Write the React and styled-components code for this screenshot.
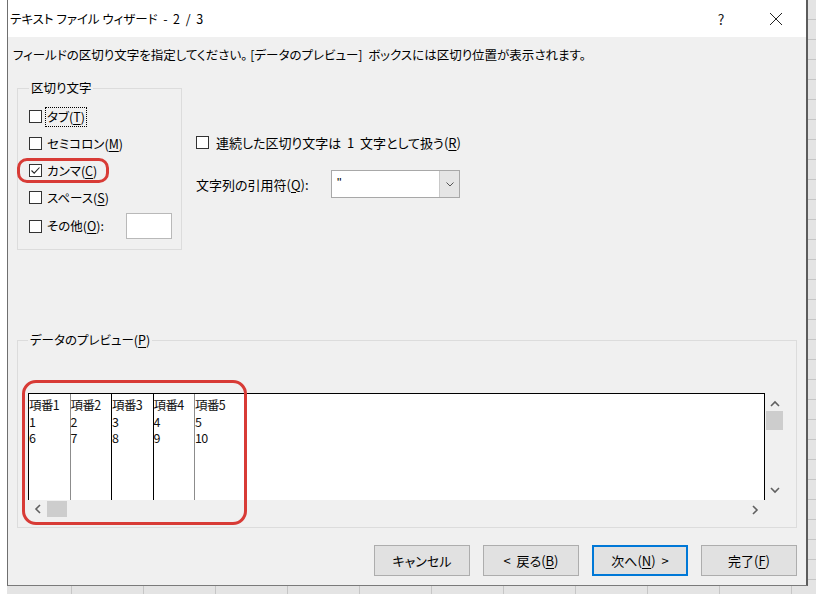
import React from "react";
import styled, { createGlobalStyle } from "styled-components";

const GlobalStyle = createGlobalStyle`
  html, body {
    margin: 0;
    padding: 0;
  }
  body {
    width: 816px;
    height: 594px;
    overflow: hidden;
    background-color: #e4e4e4;
    background-image:
      repeating-linear-gradient(to bottom, transparent 0 19px, #c6c6c6 19px 20px),
      repeating-linear-gradient(to right, transparent 0 71px, #c6c6c6 71px 72px);
    font-family: "Noto Sans CJK JP", "Noto Sans", sans-serif;
    color: #000;
  }
`;

const Screen = styled.div`
  display: flex;
  align-items: flex-start;
  height: 594px;
`;

const LeftGap = styled.div`
  width: 7px;
  align-self: stretch;
  background: #fff;
`;

const Dialog = styled.div`
  width: 801px;
  height: 586px;
  box-sizing: border-box;
  display: flex;
  flex-direction: column;
  background: #f0f0f0;
  border-left: 1px solid #6f6f6f;
  border-right: 2px solid #5c5c5c;
  border-bottom: 1px solid #7a7a7a;
  font-size: 12.5px;
  font-feature-settings: "palt";
`;

const TitleBar = styled.div`
  height: 37px;
  flex-shrink: 0;
  display: flex;
  align-items: center;
  background: #fff;
  padding-left: 2px;
`;

const Title = styled.div`
  flex: 1;
  font-size: 12.5px;
  white-space: pre;
`;

const TitleButton = styled.div`
  width: 46px;
  height: 37px;
  display: flex;
  align-items: center;
  justify-content: center;
  font-size: 14px;
  color: #222;
  margin-right: ${(p) => p.$mr || 0}px;
`;

const Body = styled.div`
  flex: 1;
  display: flex;
  flex-direction: column;
  padding: 0 9px 0 9px;
`;

const Instruction = styled.div`
  margin: 9px 0 0 -4px;
  line-height: 18px;
  white-space: pre;
`;

const TopArea = styled.div`
  display: flex;
  align-items: flex-start;
  margin-top: 15px;
`;

const Group = styled.fieldset`
  margin: 0;
  border: 1px solid #dcdcdc;
  padding: ${(p) => p.$pad};
  width: ${(p) => p.$width};
  box-sizing: border-box;
  min-width: 0;
`;

const Legend = styled.legend`
  padding: 0 2px;
  line-height: 18px;
`;

const OptionRow = styled.div`
  position: relative;
  display: flex;
  align-items: center;
  height: ${(p) => p.$h || 27}px;
`;

const Box = styled.span`
  width: 13px;
  height: 13px;
  box-sizing: border-box;
  border: 1px solid #333;
  background: #fff;
  display: inline-flex;
  align-items: center;
  justify-content: center;
  flex-shrink: 0;
  margin-right: ${(p) => p.$gap || 5}px;
`;

const Label = styled.span`
  border: 1px dotted ${(p) => (p.$focus ? "#000" : "transparent")};
  padding: 1px 1px;
  margin-left: -2px;
  line-height: 16px;
  white-space: nowrap;
`;

const Key = styled.span`
  text-decoration: underline;
  text-underline-offset: 2px;
`;

const SmallInput = styled.span`
  width: 46px;
  height: 26px;
  box-sizing: border-box;
  border: 1px solid #b9b9b9;
  background: #fff;
  margin-left: auto;
`;

const Ring = styled.span`
  position: absolute;
  left: ${(p) => p.$l}px;
  top: ${(p) => p.$t}px;
  width: ${(p) => p.$w}px;
  height: ${(p) => p.$h}px;
  box-sizing: border-box;
  border: 3px solid #d83b36;
  border-radius: ${(p) => p.$r}px;
  pointer-events: none;
`;

const Options = styled.div`
  display: flex;
  flex-direction: column;
  margin-left: 14px;
  padding-top: 53px;
`;

const SimpleRow = styled.div`
  display: flex;
  align-items: center;
  height: 20px;
  white-space: pre;
  font-size: 13px;
`;

const QuoteRow = styled.div`
  display: flex;
  align-items: center;
  margin-top: 18px;
  white-space: nowrap;
`;

const QuoteLabel = styled.span`
  width: 135px;
  font-size: 13px;
`;

const Combo = styled.div`
  display: flex;
  width: 129px;
  height: 28px;
  box-sizing: border-box;
  border: 1px solid #a8a8a8;
  background: #fff;
`;

const ComboText = styled.div`
  flex: 1;
  padding-left: 5px;
  line-height: 24px;
  font-family: "Liberation Sans", sans-serif;
`;

const ComboButton = styled.div`
  width: 19px;
  background: #e5e5e5;
  border-left: 1px solid #c9c9c9;
  display: flex;
  align-items: center;
  justify-content: center;
`;

const PreviewGroup = styled(Group)`
  margin-top: 81px;
`;

const PreviewWrap = styled.div`
  position: relative;
  display: grid;
  grid-template-columns: 1fr 19px;
  grid-template-rows: 107px 18px;
`;

const DataArea = styled.div`
  display: flex;
  background: #fff;
  border: 1px solid #000;
  border-bottom: none;
  overflow: hidden;
`;

const DataCol = styled.div`
  width: ${(p) => (p.$last ? 50 : 40.5)}px;
  flex-shrink: 0;
  border-right: 1px solid ${(p) => (p.$last ? "transparent" : p.$dark ? "#000" : "#8c8c8c")};
  font-feature-settings: normal;
  font-size: 12.5px;
  line-height: 16.5px;
  padding-top: 3px;
  letter-spacing: -0.6px;
  color: #111;
`;

const VScroll = styled.div`
  display: flex;
  flex-direction: column;
  align-items: center;
  padding-top: 7px;
`;

const VThumb = styled.div`
  width: 17px;
  height: 19px;
  background: #cdcdcd;
  margin-top: 3px;
`;

const HScroll = styled.div`
  display: flex;
  align-items: center;
  padding-left: 6px;
`;

const HThumb = styled.div`
  width: 20px;
  height: 16px;
  background: #cdcdcd;
  margin-left: 5px;
`;

const Spacer = styled.div`
  flex: 1;
`;

const Corner = styled.div``;

const ButtonRow = styled.div`
  display: flex;
  justify-content: flex-end;
  gap: 13px;
  margin-top: 17px;
`;

const Button = styled.div`
  width: 96px;
  height: 31px;
  box-sizing: border-box;
  display: flex;
  align-items: center;
  justify-content: center;
  background: #e1e1e1;
  border: 1px solid ${(p) => (p.$primary ? "#0078d7" : "#adadad")};
  box-shadow: ${(p) => (p.$primary ? "inset 0 0 0 1px #0078d7" : "none")};
  white-space: pre;
  font-size: 13px;
`;

const Chevron = ({ dir }) => {
  const paths = {
    up: "M1 6 L5 2 L9 6",
    down: "M1 2 L5 6 L9 2",
    left: "M6 1 L2 5 L6 9",
    right: "M2 1 L6 5 L2 9",
  };
  const vertical = dir === "up" || dir === "down";
  return (
    <svg
      width={vertical ? 10 : 8}
      height={vertical ? 8 : 10}
      viewBox={vertical ? "0 0 10 8" : "0 0 8 10"}
    >
      <path d={paths[dir]} fill="none" stroke="#606060" strokeWidth="1.6" />
    </svg>
  );
};

const Check = () => (
  <svg width="11" height="11" viewBox="0 0 11 11">
    <path d="M1.5 5.5 L4.2 8.2 L9.5 2.5" fill="none" stroke="#222" strokeWidth="1.1" />
  </svg>
);

const columns = [
  ["項番1", "1", "6"],
  ["項番2", "2", "7"],
  ["項番3", "3", "8"],
  ["項番4", "4", "9"],
  ["項番5", "5", "10"],
];

const delimiters = [
  { text: "タブ", key: "T", focus: true },
  { text: "セミコロン", key: "M" },
  { text: "カンマ", key: "C", checked: true, ring: true },
  { text: "スペース", key: "S" },
];

const App = () => {
  return (
    <>
      <GlobalStyle />
      <Screen>
        <LeftGap />
        <Dialog>
          <TitleBar>
            <Title>テキスト ファイル ウィザード  -  2  /  3</Title>
            <TitleButton $mr={9}>?</TitleButton>
            <TitleButton $mr={7}>
              <svg width="14" height="14" viewBox="0 0 14 14">
                <path d="M1 1 L13 13 M13 1 L1 13" stroke="#222" strokeWidth="1" />
              </svg>
            </TitleButton>
          </TitleBar>
          <Body>
            <Instruction>
              フィールドの区切り文字を指定してください。 [データのプレビュー]  ボックスには区切り位置が表示されます。
            </Instruction>
            <TopArea>
              <Group $width="165px" $pad="6px 9px 8px 11px">
                <Legend>区切り文字</Legend>
                {delimiters.map((d) => (
                  <OptionRow key={d.key}>
                    <Box>{d.checked && <Check />}</Box>
                    <Label $focus={d.focus}>
                      {d.text}(<Key>{d.key}</Key>)
                    </Label>
                    {d.ring && <Ring $l={-12} $t={1} $w={92} $h={25} $r={10} />}
                  </OptionRow>
                ))}
                <OptionRow $h={30}>
                  <Box />
                  <Label>
                    その他(<Key>O</Key>):
                  </Label>
                  <SmallInput />
                </OptionRow>
              </Group>
              <Options>
                <SimpleRow>
                  <Box $gap={7} />
                  連続した区切り文字は  1  文字として扱う(<Key>R</Key>)
                </SimpleRow>
                <QuoteRow>
                  <QuoteLabel>
                    文字列の引用符(<Key>Q</Key>):
                  </QuoteLabel>
                  <Combo>
                    <ComboText>"</ComboText>
                    <ComboButton>
                      <svg width="8" height="5" viewBox="0 0 8 5">
                        <path d="M0.5 0.5 L4 4 L7.5 0.5" fill="none" stroke="#555" strokeWidth="1" />
                      </svg>
                    </ComboButton>
                  </Combo>
                </QuoteRow>
              </Options>
            </TopArea>
            <PreviewGroup $width="100%" $pad="44px 12px 9px 10px">
              <Legend>
                データのプレビュー(<Key>P</Key>)
              </Legend>
              <PreviewWrap>
                <DataArea>
                  {columns.map((col, i) => (
                    <DataCol key={i} $dark={i === 1 || i === 2} $last={i === columns.length - 1}>
                      {col.map((v) => (
                        <div key={v}>{v}</div>
                      ))}
                    </DataCol>
                  ))}
                </DataArea>
                <VScroll>
                  <Chevron dir="up" />
                  <VThumb />
                  <Spacer />
                  <div style={{ marginBottom: 2 }}>
                    <Chevron dir="down" />
                  </div>
                </VScroll>
                <HScroll>
                  <Chevron dir="left" />
                  <HThumb />
                  <Spacer />
                  <div style={{ marginRight: 6 }}>
                    <Chevron dir="right" />
                  </div>
                </HScroll>
                <Corner />
                <Ring $l={-6} $t={-13} $w={225} $h={145} $r={14} />
              </PreviewWrap>
            </PreviewGroup>
            <ButtonRow>
              <Button>キャンセル</Button>
              <Button>
                {"<  戻る("}<Key>B</Key>)
              </Button>
              <Button $primary>
                次へ(<Key>N</Key>){"  >"}
              </Button>
              <Button>
                完了(<Key>F</Key>)
              </Button>
            </ButtonRow>
          </Body>
        </Dialog>
      </Screen>
    </>
  );
};

export default App;
